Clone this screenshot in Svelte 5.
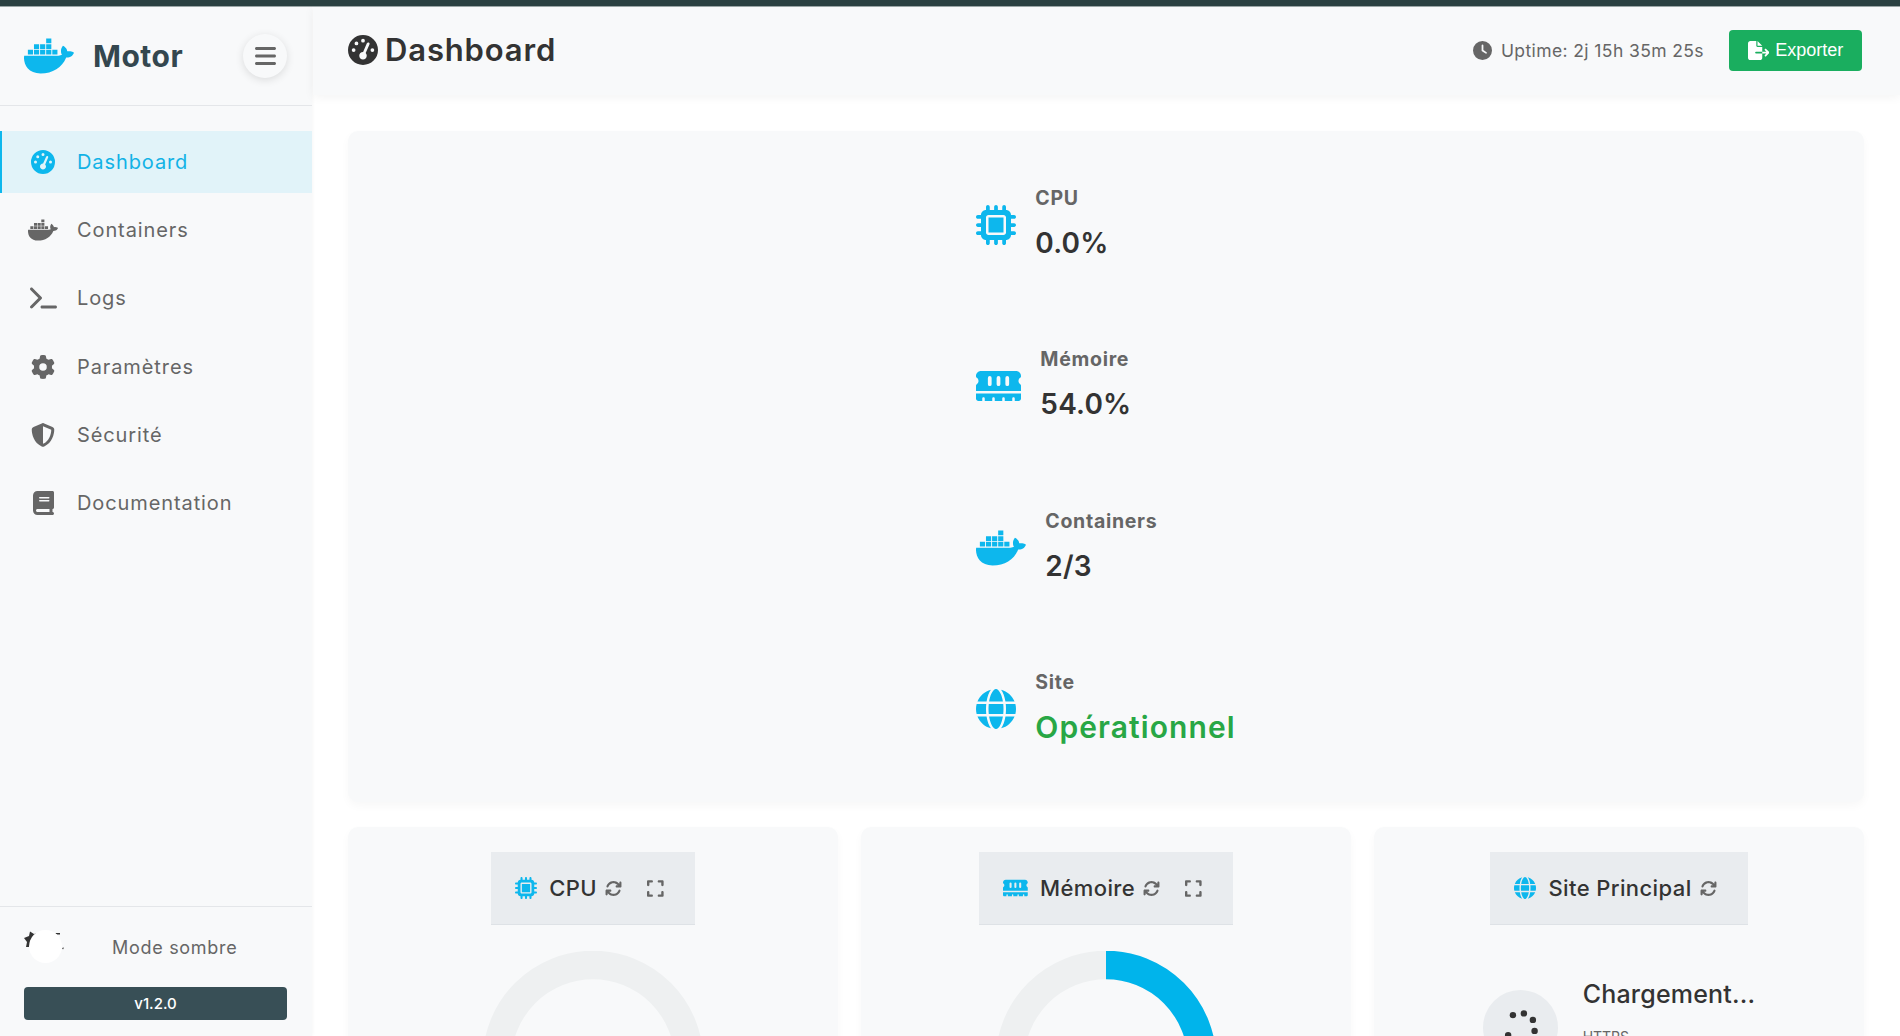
<script>
  const I = {
    gauge: [512, "M0 256a256 256 0 1 1 512 0A256 256 0 1 1 0 256zM288 96a32 32 0 1 0 -64 0 32 32 0 1 0 64 0zM256 416c35.3 0 64-28.7 64-64c0-17.4-6.9-33.1-18.1-44.6L366 161.7c5.3-12.1-.2-26.3-12.3-31.6s-26.3 .2-31.6 12.3L257.9 288c-.6 0-1.3 0-1.9 0c-35.3 0-64 28.7-64 64s28.7 64 64 64zM176 144a32 32 0 1 0 -64 0 32 32 0 1 0 64 0zM96 288a32 32 0 1 0 0-64 32 32 0 1 0 0 64zm352-32a32 32 0 1 0 -64 0 32 32 0 1 0 64 0z"],
    docker: [640, "M349.9 236.3h-66.1v-59.4h66.1v59.4zm0-204.3h-66.1v60.7h66.1V32zm78.2 144.8H362v59.4h66.1v-59.4zm-156.3-72.1h-66.1v60.1h66.1v-60.1zm78.1 0h-66.1v60.1h66.1v-60.1zm276.8 100c-14.4-9.7-47.6-13.2-73.1-8.4-3.3-24-16.7-44.9-41.1-63.7l-14-9.3-9.3 14c-18.4 27.8-23.4 73.6-3.7 103.8-8.7 4.7-25.8 11.1-48.4 10.7H2.4c-8.7 50.8 5.8 116.8 44 162.1 37.1 43.9 92.7 66.2 165.4 66.2 157.4 0 273.9-72.5 328.4-204.2 21.4.4 67.6.1 91.3-45.2 1.5-2.5 6.6-13.2 8.5-17.1l-13.3-8.9zm-511.1-27.9h-66v59.4h66.1v-59.4zm78.1 0h-66.1v59.4h66.1v-59.4zm78.1 0h-66.1v59.4h66.1v-59.4zm-78.1-72.1h-66.1v60.1h66.1v-60.1z"],
    terminal: [576, "M9.4 86.6C-3.1 74.1-3.1 53.9 9.4 41.4s32.8-12.5 45.3 0l192 192c12.5 12.5 12.5 32.8 0 45.3l-192 192c-12.5 12.5-32.8 12.5-45.3 0s-12.5-32.8 0-45.3L178.7 256 9.4 86.6zM256 416H544c17.7 0 32 14.3 32 32s-14.3 32-32 32H256c-17.7 0-32-14.3-32-32s14.3-32 32-32z"],
    gear: [512, "M495.9 166.6c3.2 8.7 .5 18.4-6.4 24.6l-43.3 39.4c1.1 8.3 1.7 16.8 1.7 25.4s-.6 17.1-1.7 25.4l43.3 39.4c6.9 6.2 9.6 15.9 6.4 24.6c-4.4 11.9-9.7 23.3-15.8 34.3l-4.7 8.1c-6.6 11-14 21.4-22.1 31.2c-5.9 7.2-15.7 9.6-24.5 6.8l-55.7-17.7c-13.4 10.3-28.2 18.9-44 25.4l-12.5 57.1c-2 9.1-9 16.3-18.2 17.8c-13.8 2.3-28 3.5-42.5 3.5s-28.7-1.2-42.5-3.5c-9.2-1.5-16.2-8.7-18.2-17.8l-12.5-57.1c-15.8-6.5-30.6-15.1-44-25.4L83.1 425.9c-8.8 2.8-18.6 .3-24.5-6.8c-8.1-9.8-15.5-20.2-22.1-31.2l-4.7-8.1c-6.1-11-11.4-22.4-15.8-34.3c-3.2-8.7-.5-18.4 6.4-24.6l43.3-39.4C64.6 273.1 64 264.6 64 256s.6-17.1 1.7-25.4L22.4 191.2c-6.9-6.2-9.6-15.9-6.4-24.6c4.4-11.9 9.7-23.3 15.8-34.3l4.7-8.1c6.6-11 14-21.4 22.1-31.2c5.9-7.2 15.7-9.6 24.5-6.8l55.7 17.7c13.4-10.3 28.2-18.9 44-25.4l12.5-57.1c2-9.1 9-16.3 18.2-17.8C227.3 1.2 241.5 0 256 0s28.7 1.2 42.5 3.5c9.2 1.5 16.2 8.7 18.2 17.8l12.5 57.1c15.8 6.5 30.6 15.1 44 25.4l55.7-17.7c8.8-2.8 18.6-.3 24.5 6.8c8.1 9.8 15.5 20.2 22.1 31.2l4.7 8.1c6.1 11 11.4 22.4 15.8 34.3zM256 336a80 80 0 1 0 0-160 80 80 0 1 0 0 160z"],
    shield: [512, "M256 0c4.6 0 9.2 1 13.4 2.9L457.7 82.8c22 9.3 38.4 31 38.3 57.2c-.5 99.2-41.3 280.7-213.6 363.2c-16.7 8-36.1 8-52.8 0C57.3 420.7 16.5 239.2 16 140c-.1-26.2 16.3-47.9 38.3-57.2L242.7 2.9C246.8 1 251.4 0 256 0zm0 66.8V444.8C394 378 431.1 230.1 432 141.4L256 66.8l0 0z"],
    book: [448, "M96 0C43 0 0 43 0 96V416c0 53 43 96 96 96H384h32c17.7 0 32-14.3 32-32s-14.3-32-32-32V384c17.7 0 32-14.3 32-32V32c0-17.7-14.3-32-32-32H384 96zm0 384H352v64H96c-17.7 0-32-14.3-32-32s14.3-32 32-32zm32-240c0-8.8 7.2-16 16-16H336c8.8 0 16 7.2 16 16s-7.2 16-16 16H144c-8.8 0-16-7.2-16-16zm16 48H336c8.8 0 16 7.2 16 16s-7.2 16-16 16H144c-8.8 0-16-7.2-16-16s7.2-16 16-16z"],
    bars: [448, "M0 96C0 78.3 14.3 64 32 64H416c17.7 0 32 14.3 32 32s-14.3 32-32 32H32C14.3 128 0 113.7 0 96zM0 256c0-17.7 14.3-32 32-32H416c17.7 0 32 14.3 32 32s-14.3 32-32 32H32c-17.7 0-32-14.3-32-32zM448 416c0 17.7-14.3 32-32 32H32c-17.7 0-32-14.3-32-32s14.3-32 32-32H416c17.7 0 32 14.3 32 32z"],
    clock: [512, "M256 0a256 256 0 1 1 0 512A256 256 0 1 1 256 0zM232 120V256c0 8 4 15.5 10.7 20l96 64c11 7.4 25.9 4.4 33.3-6.7s4.4-25.9-6.7-33.3L280 243.2V120c0-13.3-10.7-24-24-24s-24 10.7-24 24z"],
    fileExport: [576, "M0 64C0 28.7 28.7 0 64 0H224V128c0 17.7 14.3 32 32 32H384V288H216c-13.3 0-24 10.7-24 24s10.7 24 24 24H384V448c0 35.3-28.7 64-64 64H64c-35.3 0-64-28.7-64-64V64zM384 336V288H494.1l-39-39c-9.4-9.4-9.4-24.6 0-33.9s24.6-9.4 33.9 0l80 80c9.4 9.4 9.4 24.6 0 33.9l-80 80c-9.4 9.4-24.6 9.4-33.9 0s-9.4-24.6 0-33.9l39-39H384zm0-208H256V0L384 128z"],
    chip: [512, "M176 24c0-13.3-10.7-24-24-24s-24 10.7-24 24V64c-35.3 0-64 28.7-64 64H24c-13.3 0-24 10.7-24 24s10.7 24 24 24H64v56H24c-13.3 0-24 10.7-24 24s10.7 24 24 24H64v56H24c-13.3 0-24 10.7-24 24s10.7 24 24 24H64c0 35.3 28.7 64 64 64v40c0 13.3 10.7 24 24 24s24-10.7 24-24V448h56v40c0 13.3 10.7 24 24 24s24-10.7 24-24V448h56v40c0 13.3 10.7 24 24 24s24-10.7 24-24V448c35.3 0 64-28.7 64-64h40c13.3 0 24-10.7 24-24s-10.7-24-24-24H448V280h40c13.3 0 24-10.7 24-24s-10.7-24-24-24H448V176h40c13.3 0 24-10.7 24-24s-10.7-24-24-24H448c0-35.3-28.7-64-64-64V24c0-13.3-10.7-24-24-24s-24 10.7-24 24V64H280V24c0-13.3-10.7-24-24-24s-24 10.7-24 24V64H176V24zM160 128H352c17.7 0 32 14.3 32 32V352c0 17.7-14.3 32-32 32H160c-17.7 0-32-14.3-32-32V160c0-17.7 14.3-32 32-32zm192 32H160V352H352V160z"],
    memory: [576, "M64 64C28.7 64 0 92.7 0 128v7.4c0 6.8 4.4 12.6 10.1 16.3C23.3 160.3 32 175.1 32 192s-8.7 31.7-21.9 40.3C4.4 236 0 241.8 0 248.6V320H576V248.6c0-6.8-4.4-12.6-10.1-16.3C552.7 223.7 544 208.9 544 192s8.7-31.7 21.9-40.3c5.7-3.7 10.1-9.5 10.1-16.3V128c0-35.3-28.7-64-64-64H64zM176 128a24 24 0 0 0-24 24v80a24 24 0 0 0 48 0v-80a24 24 0 0 0-24-24zM288 128a24 24 0 0 0-24 24v80a24 24 0 0 0 48 0v-80a24 24 0 0 0-24-24zM400 128a24 24 0 0 0-24 24v80a24 24 0 0 0 48 0v-80a24 24 0 0 0-24-24zM576 352H0v64c0 17.7 14.3 32 32 32H80V416c0-8.8 7.2-16 16-16s16 7.2 16 16v32h96V416c0-8.8 7.2-16 16-16s16 7.2 16 16v32h96V416c0-8.8 7.2-16 16-16s16 7.2 16 16v32h96V416c0-8.8 7.2-16 16-16s16 7.2 16 16v32h48c17.7 0 32-14.3 32-32V352z"],
    globe: [512, "M352 256c0 22.2-1.2 43.6-3.3 64H163.3c-2.2-20.4-3.3-41.8-3.3-64s1.2-43.6 3.3-64H348.7c2.2 20.4 3.3 41.8 3.3 64zm28.8-64H503.9c5.3 20.5 8.1 41.9 8.1 64s-2.8 43.5-8.1 64H380.8c2.1-20.6 3.2-42 3.2-64s-1.1-43.4-3.2-64zm112.6-32H376.7c-10-63.9-29.8-117.4-55.3-151.6c78.3 20.7 142 77.5 172.1 151.6zm-149.1 0H167.7c6.1-36.4 15.5-68.6 27-94.7c10.5-23.6 22.2-40.7 33.5-51.5C239.4 3.2 248.7 0 256 0s16.6 3.2 27.8 13.8c11.3 10.8 23 27.9 33.5 51.5c11.6 26 20.9 58.2 27 94.7zm-209 0H18.6C48.6 85.9 112.2 29.1 190.6 8.4C165.1 42.6 145.3 96.1 135.3 160zM8.1 192H131.2c-2.1 20.6-3.2 42-3.2 64s1.1 43.4 3.2 64H8.1C2.8 299.5 0 278.1 0 256s2.8-43.5 8.1-64zM194.7 446.6c-11.6-26-20.9-58.2-27-94.6H344.3c-6.1 36.4-15.5 68.6-27 94.6c-10.5 23.6-22.2 40.7-33.5 51.5C272.6 508.8 263.3 512 256 512s-16.6-3.2-27.8-13.8c-11.3-10.8-23-27.9-33.5-51.5zM135.3 352c10 63.9 29.8 117.4 55.3 151.6C112.2 482.9 48.6 426.1 18.6 352H135.3zm358.1 0c-30 74.1-93.6 130.9-171.9 151.6c25.5-34.2 45.2-87.7 55.3-151.6H493.4z"],
    sync: [512, "M105.1 202.6c7.7-21.8 20.2-42.3 37.8-59.8c62.5-62.5 163.8-62.5 226.3 0L386.3 160H352c-17.7 0-32 14.3-32 32s14.3 32 32 32H463.5c0 0 0 0 0 0h.4c17.7 0 32-14.3 32-32V80c0-17.7-14.3-32-32-32s-32 14.3-32 32v35.2L414.4 97.6c-87.5-87.5-229.3-87.5-316.8 0C73.2 122 55.6 150.7 44.8 181.4c-5.9 16.7 2.9 34.9 19.5 40.8s34.9-2.9 40.8-19.5zM39 289.3c-5 1.5-9.8 4.2-13.7 8.2c-4 4-6.7 8.8-8.1 14c-.3 1.2-.6 2.5-.8 3.8c-.3 1.7-.4 3.4-.4 5.1V432c0 17.7 14.3 32 32 32s32-14.3 32-32V396.9l17.6 17.5 0 0c87.5 87.4 229.3 87.4 316.7 0c24.4-24.4 42.1-53.1 52.9-83.7c5.9-16.7-2.9-34.9-19.5-40.8s-34.9 2.9-40.8 19.5c-7.7 21.8-20.2 42.3-37.8 59.8c-62.5 62.5-163.8 62.5-226.3 0l-.1-.1L125.6 352H160c17.7 0 32-14.3 32-32s-14.3-32-32-32H48.4c-1.6 0-3.2 .1-4.8 .3s-3.1 .5-4.6 1z"],
    expand: [448, "M32 32C14.3 32 0 46.3 0 64v96c0 17.7 14.3 32 32 32s32-14.3 32-32V96h64c17.7 0 32-14.3 32-32s-14.3-32-32-32H32zM64 352c0-17.7-14.3-32-32-32s-32 14.3-32 32v96c0 17.7 14.3 32 32 32h96c17.7 0 32-14.3 32-32s-14.3-32-32-32H64V352zM320 32c-17.7 0-32 14.3-32 32s14.3 32 32 32h64v64c0 17.7 14.3 32 32 32s32-14.3 32-32V64c0-17.7-14.3-32-32-32H320zM448 352c0-17.7-14.3-32-32-32s-32 14.3-32 32v64H320c-17.7 0-32 14.3-32 32s14.3 32 32 32h96c17.7 0 32-14.3 32-32V352z"]
  };

  const nav = [
    { label: "Dashboard", icon: "gauge", active: true },
    { label: "Containers", icon: "docker" },
    { label: "Logs", icon: "terminal" },
    { label: "Paramètres", icon: "gear" },
    { label: "Sécurité", icon: "shield" },
    { label: "Documentation", icon: "book" }
  ];

  const stats = [
    { label: "CPU", value: "0.0%", icon: "chip" },
    { label: "Mémoire", value: "54.0%", icon: "memory" },
    { label: "Containers", value: "2/3", icon: "docker" },
    { label: "Site", value: "Opérationnel", icon: "globe", ok: true }
  ];

  const R = 96;
  const C = 2 * Math.PI * R;
  const charts = [
    { label: "CPU", icon: "chip", pct: 0 },
    { label: "Mémoire", icon: "memory", pct: 54 }
  ];
  const dots = [0, 1, 2, 3, 4, 5, 7].map((k) => {
    const a = ((13.5 + 45 * k) * Math.PI) / 180;
    return { x: 37.5 + 14.5 * Math.sin(a), y: 37.5 - 14.5 * Math.cos(a) };
  });
</script>

{#snippet icon(name, size)}
  <svg class="ic" width={(size * I[name][0]) / 512} height={size} viewBox={`0 0 ${I[name][0]} 512`} aria-hidden="true">
    <path fill="currentColor" fill-rule="evenodd" d={I[name][1]} />
  </svg>
{/snippet}

<div class="page">
  <div class="topbar"></div>
  <div class="shell">
    <aside class="sidebar">
      <div class="brand">
        <span class="logo">{@render icon("docker", 40)}</span>
        <span class="brand-name">Motor</span>
        <button class="burger" aria-label="Menu">{@render icon("bars", 24)}</button>
      </div>
      <nav class="nav">
        {#each nav as item}
          <a class="nav-item" class:active={item.active} href="#top">
            <span class="nav-icon">{@render icon(item.icon, 24)}</span>
            <span class="nav-label">{item.label}</span>
          </a>
        {/each}
      </nav>
      <div class="side-foot">
        <div class="mode">
          <div class="toggle">
            <svg class="sun" width="44" height="40" viewBox="0 0 44 40" aria-hidden="true">
              <polygon points="6,5.5 10,8 14,7 12,12 8,16 5,21 2,21 3,16 0,12 5,10" />
              <polygon points="31,7 36,7 36,8.5 33,8.5" />
              <polygon points="38,22 40,21.5 39,23.5" />
            </svg>
            <span class="knob"></span>
          </div>
          <span class="mode-label">Mode sombre</span>
        </div>
        <div class="version">v1.2.0</div>
      </div>
    </aside>

    <div class="content">
      <header class="head">
        <h1>{@render icon("gauge", 30)}<span>Dashboard</span></h1>
        <div class="head-right">
          <span class="uptime">{@render icon("clock", 19)}<span>Uptime: 2j 15h 35m 25s</span></span>
          <button class="export">{@render icon("fileExport", 19)}<span>Exporter</span></button>
        </div>
      </header>

      <main class="main">
        <section class="card overview">
          <div class="stats">
            {#each stats as s}
              <div class="stat">
                <span class="stat-icon">{@render icon(s.icon, 40)}</span>
                <div class="stat-text">
                  <div class="stat-label">{s.label}</div>
                  <div class="stat-value" class:ok={s.ok}>{s.value}</div>
                </div>
              </div>
            {/each}
          </div>
        </section>

        <div class="grid">
          {#each charts as c}
            <section class="card panel">
              <div class="panel-head">
                <span class="panel-icon">{@render icon(c.icon, 22)}</span>
                <span class="panel-title">{c.label}</span>
                <span class="tool">{@render icon("sync", 17)}</span>
                <span class="tool wide">{@render icon("expand", 19)}</span>
              </div>
              <svg class="donut" width="220" height="220" viewBox="0 0 220 220" aria-hidden="true">
                <circle cx="110" cy="110" r={R} class="track" />
                {#if c.pct > 0}
                  <circle cx="110" cy="110" r={R} class="arc" stroke-dasharray={`${(C * c.pct) / 100} ${C}`} transform="rotate(-90 110 110)" />
                {/if}
              </svg>
            </section>
          {/each}
          <section class="card panel">
            <div class="panel-head">
              <span class="panel-icon">{@render icon("globe", 22)}</span>
              <span class="panel-title">Site Principal</span>
              <span class="tool">{@render icon("sync", 17)}</span>
            </div>
            <div class="site">
              <div class="spinner">
                <svg width="75" height="75" viewBox="0 0 75 75" aria-hidden="true">
                  {#each dots as d}
                    <circle cx={d.x} cy={d.y} r="3.2" />
                  {/each}
                </svg>
              </div>
              <div class="site-text">
                <div class="site-title">Chargement...</div>
                <div class="site-proto">HTTPS</div>
              </div>
            </div>
          </section>
        </div>
      </main>
    </div>
  </div>
</div>

<style>
  :global(body) {
    margin: 0;
    background: #fff;
    overflow: hidden;
    font-family: Inter, "Noto Sans", "Liberation Sans", sans-serif;
  }
  .ic { display: block; flex: none; }
  .page { height: 100vh; display: flex; flex-direction: column; overflow: hidden; }
  .topbar { height: 6px; flex: none; background: #2b4141; box-shadow: 0 1px 0 rgba(43, 65, 65, 0.45); position: relative; z-index: 2; }
  .shell { flex: 1; min-height: 0; display: flex; }

  .sidebar {
    width: 312px; flex: none; display: flex; flex-direction: column;
    background: #f8f9fa; box-shadow: 1px 0 3px rgba(0, 0, 0, 0.03);
  }
  .brand {
    height: 99px; box-sizing: content-box; border-bottom: 1px solid #e4e6e9;
    display: flex; align-items: center; padding: 0 25px 0 24px;
  }
  .logo { color: #0db7ed; margin-right: 19px; }
  .brand-name { font-size: 30px; font-weight: 700; color: #34474f; letter-spacing: 0.5px; flex: 1; }
  .burger {
    width: 44px; height: 44px; border: 0; border-radius: 50%; background: #f8f9fa;
    color: #666; display: flex; align-items: center; justify-content: center; padding: 0;
    box-shadow: 0 2px 8px rgba(0, 0, 0, 0.12);
  }
  .nav { display: flex; flex-direction: column; gap: 6px; padding-top: 25px; }
  .nav-item {
    height: 62.2px; display: flex; align-items: center; padding-left: 28px; box-sizing: border-box;
    color: #666; text-decoration: none; font-size: 20px; letter-spacing: 0.9px;
  }
  .nav-item.active {
    background: #e1f3f9; color: #12b2e6; border-left: 2px solid #0db7ed; padding-left: 26px;
  }
  .nav-item.active .nav-icon { color: #0db7ed; }
  .nav-icon { width: 30px; display: flex; justify-content: center; margin-right: 19px; }

  .side-foot { margin-top: auto; border-top: 1px solid #e4e6e9; padding: 23px 25px 16px 24px; }
  .mode { display: flex; align-items: center; height: 34px; }
  .toggle { position: relative; width: 88px; height: 34px; flex: none; }
  .sun { position: absolute; left: 0; top: -4px; fill: #333; }
  .knob { position: absolute; left: 5px; top: 0; width: 33px; height: 33px; border-radius: 50%; background: #fff; }
  .mode-label { color: #666; font-size: 18px; letter-spacing: 0.7px; }
  .version {
    margin-top: 23px; height: 33px; border-radius: 4px; background: #384f56; color: #fff;
    font-size: 15px; font-weight: 500; display: flex; align-items: center; justify-content: center;
  }

  .content { flex: 1; min-width: 0; }
  .head {
    height: 89px; background: #f8f9fa; box-shadow: 0 2px 10px rgba(0, 0, 0, 0.05);
    display: flex; align-items: center; justify-content: space-between; padding: 0 38px 0 35px;
    margin-left: 1px;
  }
  h1 {
    margin: 0; display: flex; align-items: center; gap: 7px; color: #333;
    font-size: 31px; font-weight: 600; letter-spacing: 0.85px; position: relative; top: -1px;
  }
  .head-right { display: flex; align-items: center; gap: 25px; }
  .uptime { display: flex; align-items: center; gap: 9px; color: #666; font-size: 17.5px; letter-spacing: 0.4px; }
  .export {
    width: 133px; height: 41px; border: 0; border-radius: 4px; background: #1aae5f; color: #fff;
    display: flex; align-items: center; justify-content: center; gap: 6px; padding: 0;
    font-family: "Liberation Sans", Arial, sans-serif; font-size: 18px;
  }

  .main { padding: 36px 36px 0; }
  .card { background: #f8f9fa; border-radius: 10px; box-shadow: 0 4px 10px rgba(0, 0, 0, 0.03); }
  .overview { display: flex; justify-content: center; padding: 52.5px 0 52px; }
  .stats { display: flex; flex-direction: column; align-items: flex-start; gap: 79.5px; }
  .stat { display: flex; align-items: center; height: 82px; }
  .stat-icon { color: #0db7ed; margin-right: 19px; }
  .stat-text { padding-bottom: 3px; }
  .stat-label { color: #666; font-size: 19.5px; font-weight: 700; letter-spacing: 0.7px; line-height: 26px; margin-bottom: 13px; position: relative; top: 1px; }
  .stat-value { color: #333; font-size: 28px; font-weight: 600; letter-spacing: 0.2px; line-height: 40px; }
  .stat-value.ok { color: #28a745; font-size: 30px; letter-spacing: 1.08px; }

  .grid { display: grid; grid-template-columns: repeat(3, 1fr); gap: 23px; margin-top: 25px; }
  .panel { padding-top: 25px; height: 500px; display: flex; flex-direction: column; align-items: center; }
  .panel-head {
    height: 73px; box-sizing: border-box; background: #e9ecef; border-bottom: 1px solid #dee2e6;
    display: flex; align-items: center; padding: 0 31px 0 24px;
  }
  .panel-icon { color: #0db7ed; margin-right: 12px; }
  .panel-title { color: #333; font-size: 22px; font-weight: 500; letter-spacing: 0.4px; margin-right: 8px; }
  .tool { color: #666; }
  .tool.wide { margin-left: 25px; }
  .donut { margin-top: 26px; }
  .track { fill: none; stroke: #eef0f1; stroke-width: 28.6; }
  .arc { fill: none; stroke: #00b4eb; stroke-width: 28.6; }
  .site { display: flex; gap: 25px; margin-top: 48px; }
  .spinner { width: 75px; height: 75px; border-radius: 50%; background: #e9ecef; margin-top: 17px; fill: #333; }
  .spinner svg { display: block; }
  .site-title { color: #333; font-size: 25px; font-weight: 500; letter-spacing: 0.2px; line-height: 40px; padding-top: 1px; }
  .site-proto { color: #666; font-size: 14px; margin-top: 14px; }
</style>
